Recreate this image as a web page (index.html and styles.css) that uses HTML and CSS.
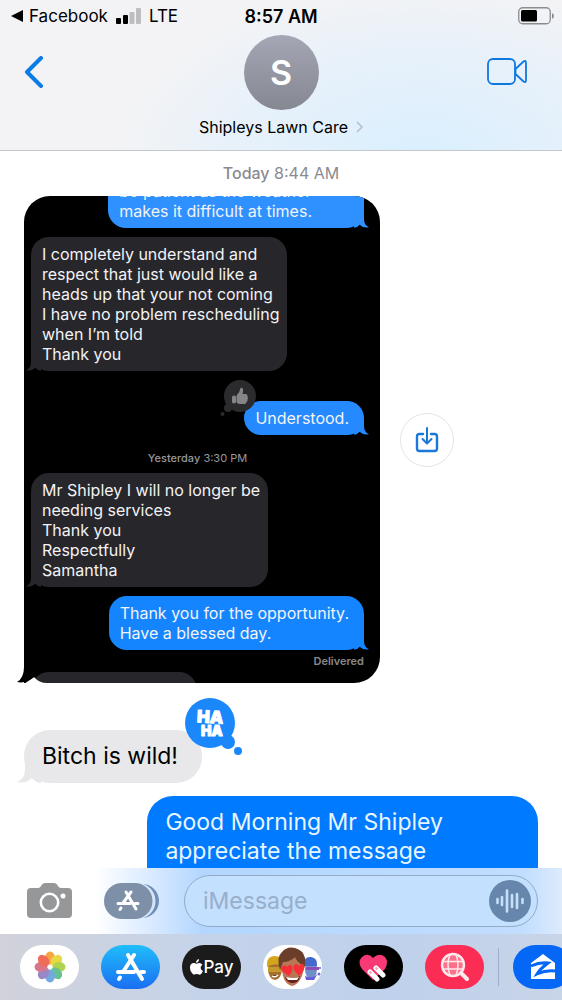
FILE: index.html
```html
<!DOCTYPE html>
<html lang="en">
<head>
<meta charset="utf-8">
<meta name="viewport" content="width=device-width, initial-scale=1">
<title>Messages</title>
<link rel="stylesheet" href="styles.css">
</head>
<body>
<svg class="defs" aria-hidden="true">
  <symbol id="tail-left" viewBox="0 0 24 28"><path d="M8 0V14Q8 24 0 27Q9 29 15 23Q19 28 24 28V0Z"/></symbol>
  <symbol id="tail-right" viewBox="0 0 24 28"><path d="M16 0V14Q16 24 24 27Q15 29 9 23Q5 28 0 28V0Z"/></symbol>
</svg>
<header class="top">
  <div class="status">
    <div class="status-left">
      <button class="back-app"><svg width="12" height="12" viewBox="0 0 12 12"><path d="M0 6 12 0V12Z"/></svg>Facebook</button>
      <svg width="25" height="16" viewBox="0 0 25 16"><rect y="10" width="5" height="6" rx="1"/><rect x="7" y="7" width="5" height="9" rx="1"/><g fill="#bdbdbf"><rect x="13.500" y="4" width="5" height="12" rx="1"/><rect x="20" width="5" height="16" rx="1"/></g></svg>
      <span>LTE</span>
    </div>
    <time class="clock">8:57 AM</time>
    <svg class="battery" width="36" height="18" viewBox="0 0 36 18"><rect x=".75" y=".75" width="31.500" height="16" rx="4" fill="none" stroke="#8b8c8e" stroke-width="1.300"/><rect x="3" y="3" width="16" height="11.500" rx="1.500"/><path d="M34 6q2 1 2 3t-2 3z" fill="#8b8c8e"/></svg>
  </div>
  <div class="nav">
    <button class="nav-back" aria-label="Back"><svg width="20" height="32" viewBox="0 0 20 32"><path d="M17 2 3 16 17 30" fill="none" stroke="#0b7be6" stroke-width="4" stroke-linecap="round" stroke-linejoin="round"/></svg></button>
    <button class="contact">
      <span class="avatar">S</span>
      <span class="contact-name">Shipleys Lawn Care<svg width="7" height="12" viewBox="0 0 7 12"><path d="M1 1 6 6 1 11" fill="none" stroke="#b9bec4" stroke-width="1.500"/></svg></span>
    </button>
    <button class="nav-video" aria-label="FaceTime"><svg width="40" height="28" viewBox="0 0 40 28" fill="none" stroke="#0f78dd" stroke-width="1.800" stroke-linejoin="round"><rect x="1" y="1" width="27" height="25" rx="5"/><path d="M28.500 11 36.500 3.500Q39 2 39 5V22Q39 25 36.500 23.500L28.500 16Z"/></svg></button>
  </div>
</header>

<main class="thread">
  <p class="stamp"><b>Today</b> 8:44 AM</p>
  <div class="photo-row">
    <div class="photo-wrap">
      <div class="photo">
        <div class="shot sent first">be patient as the weather<br>makes it difficult at times.<svg class="tail"><use href="#tail-right"/></svg></div>
        <div class="shot received">I completely understand and<br>respect that just would like a<br>heads up that your not coming<br>I have no problem rescheduling<br>when I’m told<br>Thank you<svg class="tail"><use href="#tail-left"/></svg></div>
        <div class="shot sent understood">Understood.<svg class="tail"><use href="#tail-right"/></svg>
          <svg class="like" width="38" height="38" viewBox="0 0 38 38"><g fill="#2b2b2e"><circle cx="20" cy="16" r="16"/><circle cx="8" cy="28" r="4"/><circle cx="2.500" cy="34" r="2"/></g><g fill="#858588"><rect x="12" y="15.500" width="4" height="8" rx="1.800"/><path d="M16.500 15.500Q20 12 20.500 8Q22 7 23 9Q23.500 11 22.500 14H26Q28 14.500 27.500 16.500Q28.500 18 27.500 19.500Q28 21 26.500 22Q26.500 24 24.500 24H20Q17 24 16.500 22Z"/></g></svg>
        </div>
        <p class="shot-stamp"><b>Yesterday</b> 3:30 PM</p>
        <div class="shot received">Mr Shipley I will no longer be<br>needing services<br>Thank you<br>Respectfully<br>Samantha<svg class="tail"><use href="#tail-left"/></svg></div>
        <div class="shot sent last">Thank you for the opportunity.<br>Have a blessed day.<svg class="tail"><use href="#tail-right"/></svg></div>
        <p class="delivered">Delivered</p>
        <div class="shot-cut"></div>
      </div>
      <svg class="photo-tail" width="30" height="24" viewBox="0 0 30 24"><path fill="#fff" d="M7 25 17 18Q22 24 30 24V25Z"/><path d="M7 0V8Q7 19 0 23Q9 25 17 18V0Z"/></svg>
    </div>
    <button class="save" aria-label="Save photo"><svg width="24" height="28" viewBox="0 0 24 28" fill="none" stroke="#1a78d8" stroke-width="2.400" stroke-linecap="round" stroke-linejoin="round"><path d="M8 8H4.500Q2 8 2 10.500V22.500Q2 25 4.500 25H19.500Q22 25 22 22.500V10.500Q22 8 19.500 8H16"/><path d="M12 2V17M7.500 13 12 17.500 16.500 13" stroke-width="2"/></svg></button>
  </div>
  <div class="bubble received">Bitch is wild!<svg class="tail"><use href="#tail-left"/></svg>
    <svg class="haha" width="60" height="58" viewBox="0 0 60 58"><g fill="#1a87fb"><circle cx="25" cy="25" r="25"/><circle cx="43" cy="44" r="7"/><circle cx="53" cy="53" r="4"/></g><g class="haha-text"><text x="12" y="25" font-size="17" transform="rotate(3 25 22)">HA</text><text x="16" y="38" font-size="14">HA</text></g></svg>
  </div>
  <div class="bubble sent">Good Morning Mr Shipley<br>appreciate the message</div>
</main>

<footer class="bottom">
  <form class="composer">
    <button type="button" aria-label="Camera"><svg width="46" height="36" viewBox="0 0 46 36"><path fill="#969798" d="M4 5H11Q13 5 14 3L15 1.500Q16 0 18 0H27Q29 0 30 1.500L31 3Q32 5 34 5H41Q45 5 45 9V31Q45 35 41 35H4Q0 35 0 31V9Q0 5 4 5Z"/><circle cx="22.500" cy="19.500" r="8.700" fill="none" stroke="#fff" stroke-width="2.600"/><circle cx="36" cy="13" r="2.500" fill="#fff"/></svg></button>
    <button type="button" aria-label="Apps"><svg width="56" height="36" viewBox="0 0 56 36"><rect x="9" y="1" width="46" height="34" rx="17" fill="#6d8fb8"/><rect x="4" width="47.500" height="36" rx="18" fill="#d5e6fa"/><rect width="48.500" height="36" rx="18" fill="#7d90a8"/><path d="M22 9 32 26M27 9 19 20M17 25 16 26.500M14 20.500H26M31 20.500H34" stroke="#fff" stroke-width="3" stroke-linecap="round"/></svg></button>
    <div class="field">
      <input type="text" placeholder="iMessage" aria-label="iMessage">
      <button type="button" class="audio" aria-label="Record audio"><svg width="28" height="24" viewBox="0 0 28 24"><path d="M1.500 10V14M6 8V16M11 1.500V22.500M16 6V18M21 5V19M26.500 10V14" stroke="#c5dffa" stroke-width="2.600" stroke-linecap="round"/></svg></button>
    </div>
  </form>
  <nav class="apps">
    <button class="app photos" aria-label="Photos"><svg width="32" height="32" viewBox="-16 -16 32 32"><g opacity=".88"><ellipse cy="-9" rx="5" ry="6.500" fill="#f49a25"/><ellipse cy="-9" rx="5" ry="6.500" fill="#e5d52c" transform="rotate(45)"/><ellipse cy="-9" rx="5" ry="6.500" fill="#a5cc3a" transform="rotate(90)"/><ellipse cy="-9" rx="5" ry="6.500" fill="#53b981" transform="rotate(135)"/><ellipse cy="-9" rx="5" ry="6.500" fill="#5d9fdd" transform="rotate(180)"/><ellipse cy="-9" rx="5" ry="6.500" fill="#8a78bd" transform="rotate(225)"/><ellipse cy="-9" rx="5" ry="6.500" fill="#d2637a" transform="rotate(270)"/><ellipse cy="-9" rx="5" ry="6.500" fill="#ed5941" transform="rotate(315)"/></g></svg></button>
    <button class="app store" aria-label="App Store"><svg width="32" height="30" viewBox="0 0 32 30" fill="none" stroke="#fff" stroke-width="4" stroke-linecap="round"><path d="M13 3 27 27M19 3 8 20M5 25.500 4 27M3 20H19M26 20H29"/></svg></button>
    <button class="app pay" aria-label="Apple Pay"><svg width="13" height="16" viewBox="0 0 13 16" fill="#fff"><path d="M9 0Q9 3.500 6 3.700 6 1 9 0ZM6.500 4.800Q8 4 9.500 4T12.500 5.800Q10.500 7 10.600 9T13 12Q11.500 15.500 9.700 15.700 8 15 6.500 15T3.800 15.700Q0 13 0 8.500 0 4 4 4 5 4.100 6.500 4.800Z"/></svg><span>Pay</span></button>
    <button class="app memoji" aria-label="Memoji"><svg width="59" height="44" viewBox="0 0 59 44"><ellipse cx="12" cy="24" rx="7" ry="11" fill="#a66f2f"/><path d="M4 22Q3 11 12 11T20 21Q12 17 4 22Z" fill="#d4a51d"/><path d="M5 22H18V27H5Z" fill="#c79a2c"/><path d="M9 31Q12 33 15 30" stroke="#fff" stroke-width="1.500"/><ellipse cx="48" cy="24" rx="6" ry="10" fill="#6e8fc9"/><path d="M40 21Q41 11 48 12T54 21Z" fill="#4369cf"/><path d="M43 22H56V25H43Z" fill="#8d4bb4"/><path d="M42 31Q50 35 55 28L51 35H43Z" fill="#6a57d9"/><circle cx="57" cy="23" r="1" fill="#5369de"/><circle cx="56" cy="29" r="1.500" fill="#7461dc"/><path d="M18 20Q17 8 29 7T42 20L39 31Q35 40 29 41 22 39 20 31Z" fill="#b87755"/><path d="M17 25Q13 12 19 7 24 1 32 3 40 5 42 13 43 20 40 25L38 19Q34 17 32 12 27 17 20 17Z" fill="#6a3e28"/><path d="M22 32Q30 35 37 31 36 38 30 38T22 32Z" fill="#65221b"/><path d="M23 32Q30 34 36 32L34 35H25Z" fill="#fff"/><g fill="#f52e38"><path d="M26 31 20 27Q16 22 20 21 23 19 24 22 27 18 29 21 31 25 26 31Z"/><path d="M36 31 31 25Q29 20 33 19 35 19 36 21 39 17 41 20 43 24 36 31Z"/></g></svg></button>
    <button class="app touch" aria-label="Digital Touch"><svg width="32" height="30" viewBox="0 0 32 30"><path fill="#f83975" d="M15 28 4 17Q-1 10 4 5 10 0 15 6 21 0 27 5 31 10 27 17Z"/><g stroke="#fff" stroke-width="5" stroke-linecap="round"><path d="M12 20 19 27M18 16 25 23"/></g><path d="M11.500 19.500 13.500 21.500M17.500 15.500 19.500 17.500" stroke="#f3a0b9" stroke-width="2"/></svg></button>
    <button class="app search" aria-label="Images"><svg width="30" height="30" viewBox="0 0 30 30" fill="none" stroke="#ffe9ec"><circle cx="13" cy="13" r="11" stroke-width="2.400" fill="#ff718a"/><path d="M2 9.500H24M2 17H24M10 2.500Q6 13 10 23.500M16 2.500Q20 13 16 23.500" stroke-width="1.500"/><path d="M21 21 27 27" stroke-width="4" stroke-linecap="round"/></svg></button>
    <span class="divider"></span>
    <button class="app zillow" aria-label="Zillow"><svg width="26" height="26" viewBox="0 0 26 26"><path fill="#fff" d="M13 0 25 9V25H1V9Z"/><path d="M1 12Q10 8 18 9 10 15 7 20 16 16 25 17" fill="none" stroke="#0567f5" stroke-width="3"/></svg></button>
  </nav>
</footer>
</body>
</html>
```
FILE: styles.css
```css
* { box-sizing: border-box; }
body {
  margin: 0;
  height: 100vh;
  display: flex;
  flex-direction: column;
  background: #fff;
  color: #000;
  font-family: Inter, "Liberation Sans", sans-serif;
}
button { padding: 0; border: 0; background: none; font: inherit; color: inherit; }
p { margin: 0; }
svg { display: block; flex: none; }
.defs { position: absolute; width: 0; height: 0; }

.top {
  flex: none;
  border-bottom: 1px solid #c3c8cd;
  background:
    radial-gradient(ellipse 55% 120% at 75% 110%, #d9efff, #dceffe88 60%, transparent),
    #f3f3f5;
}
.status {
  display: grid;
  grid-template-columns: 1fr auto 1fr;
  align-items: center;
  height: 32px;
  padding: 0 8px;
  font-size: 17px;
}
.status-left { display: flex; align-items: center; gap: 8px; padding-left: 3px; }
.back-app { display: flex; align-items: center; gap: 6px; }
.clock { font-size: 18px; font-weight: 600; }
.battery { justify-self: end; }
.nav {
  display: grid;
  grid-template-columns: 1fr auto 1fr;
  padding: 3px 24px 12px;
}
.nav-back { justify-self: start; align-self: start; padding-top: 21px; }
.nav-video { justify-self: end; align-self: start; padding: 23px 11px 0 0; }
.contact { display: flex; flex-direction: column; align-items: center; gap: 7px; padding-bottom: 1px; }
.avatar {
  width: 75px;
  height: 75px;
  border-radius: 50%;
  background: linear-gradient(#a4a7b4, #858791);
  color: #fff;
  font-size: 34px;
  font-weight: 600;
  line-height: 75px;
}
.contact-name { display: flex; align-items: center; gap: 8px; font-size: 16px; line-height: 20px; }

.thread {
  flex: 1;
  min-height: 0;
  overflow: hidden;
  display: flex;
  flex-direction: column;
  padding: 12px 24px 0;
}
.stamp { text-align: center; font-size: 16px; line-height: 20px; color: #8b8b8f; }
.stamp b, .shot-stamp b { font-weight: 500; }
.photo-row { display: flex; align-items: center; gap: 20px; margin-top: 13px; }
.photo-wrap { position: relative; }
.photo-tail { position: absolute; left: -7px; bottom: 0; }
.photo {
  position: relative;
  display: flex;
  flex-direction: column;
  align-items: flex-start;
  overflow: hidden;
  width: 356px;
  padding: 0 16px 0 7px;
  border-radius: 26px 26px 26px 0;
  background: #000;
  color: #f3f3f5;
}
.shot {
  position: relative;
  padding: 7px 8px 7px 11px;
  border-radius: 18px;
  font-size: 16px;
  line-height: 20px;
  white-space: nowrap;
}
.shot .tail { position: absolute; bottom: 0; width: 15px; height: 18px; }
.shot.sent { align-self: flex-end; background: #2f91ff; padding-right: 15px; }
.shot.sent .tail { right: -5px; fill: #2f91ff; }
.shot.received { background: #27262b; margin-top: 9px; }
.shot.received .tail { left: -5px; fill: #27262b; }
.shot.first { margin-top: -22px; padding-right: 52px; }
.shot.understood { margin-top: 30px; background: #2589ff; }
.shot.understood .tail { fill: #2589ff; }
.shot.last { margin-top: 9px; background: #1485ff; }
.shot.last .tail { fill: #1485ff; }
.like { position: absolute; left: -24px; top: -21px; }
.shot-stamp { align-self: center; margin: 16px 0 -1px; font-size: 11px; line-height: 14px; color: #98989c; }
.delivered { align-self: flex-end; margin-top: 4px; font-size: 11px; line-height: 14px; font-weight: 600; color: #88888c; }
.shot-cut { width: 166px; height: 40px; margin: 4px 0 -29px; border-radius: 18px; background: #27262b; }
.save {
  display: grid;
  place-items: center;
  width: 54px;
  height: 54px;
  border: 1px solid #e4e4e6;
  border-radius: 50%;
}

.bubble {
  position: relative;
  padding: 12px 24px 12px 18px;
  border-radius: 26px;
  font-size: 23px;
  line-height: 29px;
}
.bubble.received { align-self: flex-start; margin-top: 47px; background: #e8e8ea; }
.bubble.received .tail { position: absolute; left: -7px; bottom: 0; width: 24px; height: 28px; fill: #e8e8ea; }
.bubble.sent { align-self: flex-end; width: 76%; margin-top: 13px; padding-bottom: 40px; background: #007aff; color: #e8f6ff; }
.haha { position: absolute; right: -43px; top: -32px; }
.haha-text { fill: #fff; stroke: #fff; stroke-width: 1px; stroke-linejoin: round; font-weight: 900; }

.bottom { flex: none; }
.composer {
  display: flex;
  align-items: center;
  height: 66px;
  padding: 0 24px 0 27px;
  background: linear-gradient(90deg, #fff 17%, #d9eaff 27%, #b3d6ff 36%, #badaff 65%, #c1ddff 93%, #ddebfc);
}
.composer > button + button { margin-left: 31px; }
.field {
  flex: 1;
  display: flex;
  align-items: center;
  min-width: 0;
  height: 52px;
  margin-left: 24px;
  padding: 0 6px 0 18px;
  border: 1px solid #94abc8;
  border-radius: 26px;
  background: #c3e0ff;
}
.field input { flex: 1; min-width: 0; padding: 0; border: 0; outline: 0; background: none; font: inherit; font-size: 23px; }
.field input::placeholder { color: #98aecb; opacity: 1; }
.audio { display: grid; place-items: center; width: 42px; height: 42px; border-radius: 50%; background: #6786ac; }
.apps {
  display: flex;
  align-items: center;
  gap: 22px;
  height: 66px;
  padding-left: 20px;
  overflow: hidden;
  background: linear-gradient(90deg, #d1d2da, #c5d3e9 35%, #bfd1ec 70%, #c8d4e7);
}
.app { flex: none; display: flex; align-items: center; justify-content: center; width: 59px; height: 44px; border-radius: 22px; overflow: hidden; }
.photos, .memoji { background: #fff; }
.store { background: linear-gradient(#20bdfa, #1a6ff2); }
.pay { gap: 1px; background: #1b1b1b; color: #fff; font-size: 17px; font-weight: 500; }
.touch { background: #000; }
.search { background: #fc2d55; }
.divider { flex: none; width: 1px; height: 38px; margin: 0 -8px; background: #9eafc9; }
.zillow { background: #0567f5; }
```
